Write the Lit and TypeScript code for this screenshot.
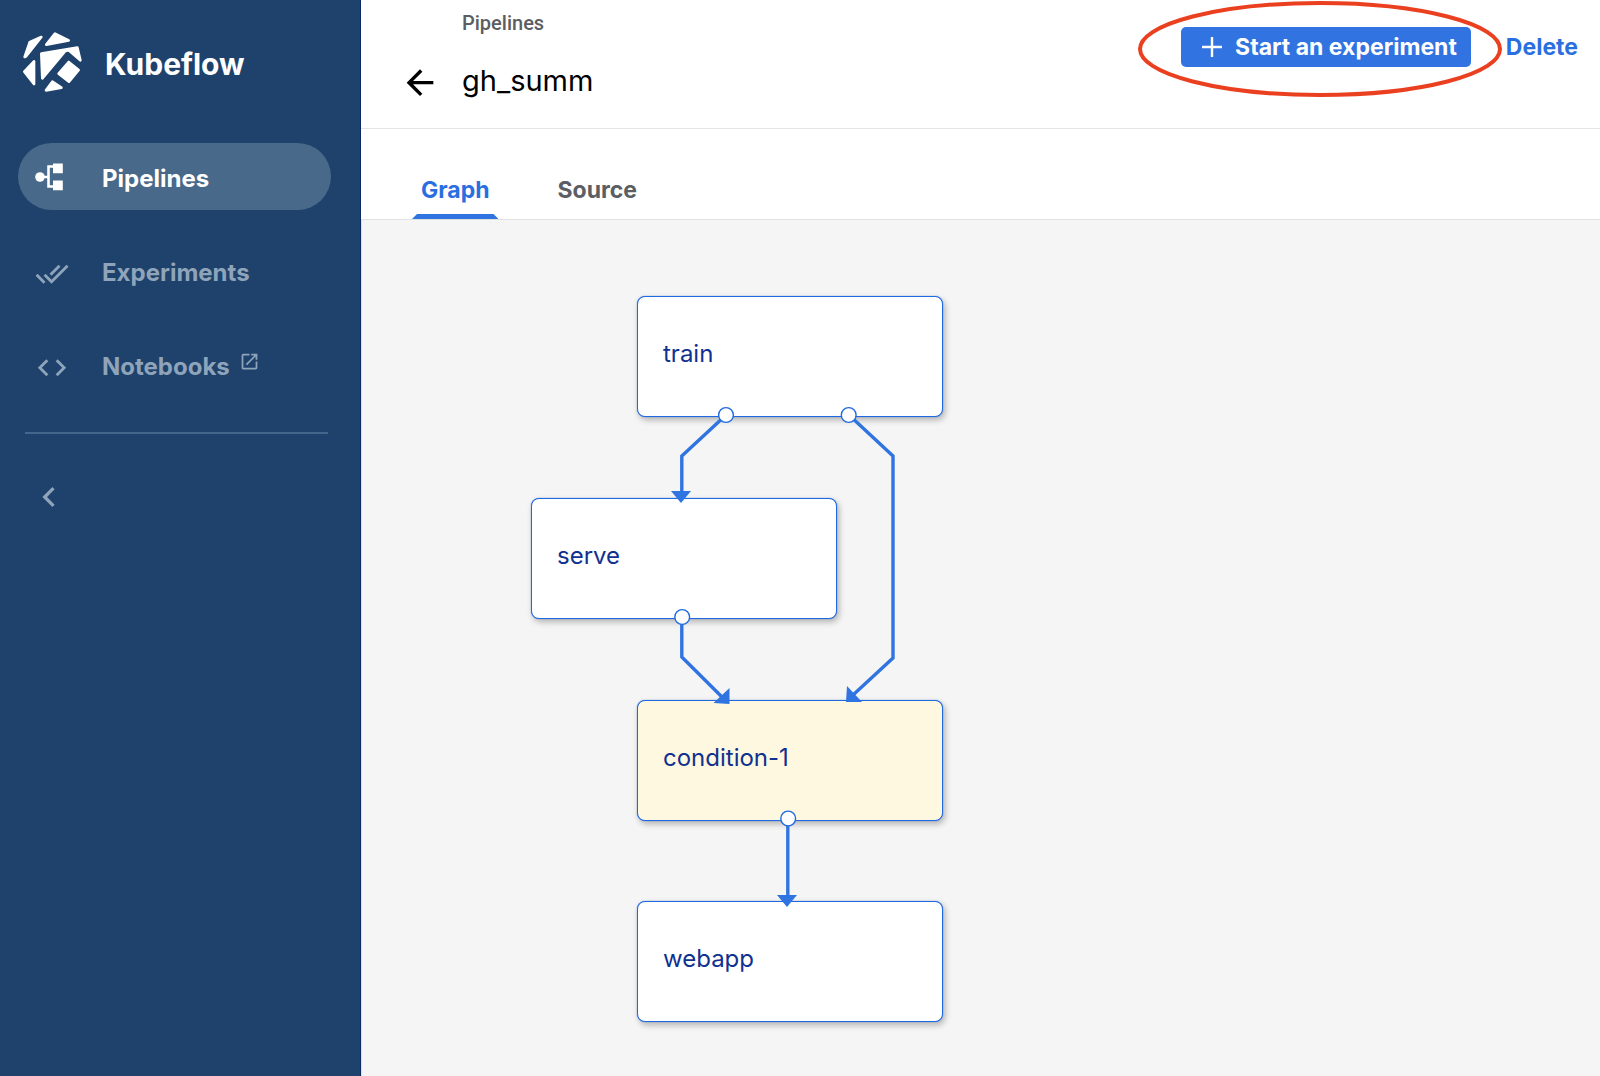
import {LitElement, html, svg, css} from 'lit';
import {customElement, property, state} from 'lit/decorators.js';
import {classMap} from 'lit/directives/class-map.js';
import {styleMap} from 'lit/directives/style-map.js';

interface NavItem {
  label: string;
  icon: unknown;
  external?: boolean;
}

const pipelineIcon = html`<svg viewBox="0 0 34 34" aria-hidden="true">
  <circle cx="5" cy="17" r="4.8" fill="currentColor"/>
  <path d="M8 17h5.5M19 6.5h-5.5v20H19" fill="none" stroke="currentColor" stroke-width="2.6"/>
  <path d="M18 3.5h9.8v9.8H18zM18 20.5h9.8v9.8H18z" fill="currentColor"/>
</svg>`;

const doneAllIcon = html`<svg viewBox="0 -2 24 24" aria-hidden="true">
  <path fill="currentColor" d="M18 7l-1.41-1.41-6.34 6.34 1.41 1.41L18 7zm4.24-1.41L11.66 16.17 7.48 12l-1.41 1.41L11.66 19l12-12-1.42-1.41zM.41 13.41L6 19l1.41-1.41L1.83 12 .41 13.41z"/>
</svg>`;

const codeIcon = html`<svg viewBox="0 -2 24 24" aria-hidden="true">
  <path fill="currentColor" d="M9.4 16.6L4.8 12l4.6-4.6L8 6l-6 6 6 6 1.4-1.4zm5.2 0l4.6-4.6-4.6-4.6L16 6l6 6-6 6-1.4-1.4z"/>
</svg>`;

const NAV: NavItem[] = [
  {label: 'Pipelines', icon: pipelineIcon},
  {label: 'Experiments', icon: doneAllIcon},
  {label: 'Notebooks', icon: codeIcon, external: true},
];

@customElement('kf-sidebar')
class KfSidebar extends LitElement {
  @property() current = 'Pipelines';

  static styles = css`
    :host {
      display: block;
      box-sizing: border-box;
      background: #1e426b;
      border-right: 1px solid #0a2a63;
      color: #8fa4ba;
    }
    .brand {
      display: flex;
      align-items: center;
      gap: 22px;
      padding: 31px 22px 50px;
      color: #fff;
      font-size: 30px;
      font-weight: 700;
    }
    .brand svg {
      width: 61px;
      height: 62px;
    }
    .text {
      padding-top: 4px;
    }
    .nav {
      display: flex;
      flex-direction: column;
      gap: 27px;
      padding: 0 29px 0 18px;
    }
    .item {
      display: flex;
      align-items: center;
      height: 67px;
      padding-left: 17px;
      border-radius: 34px;
      color: inherit;
      font-size: 24px;
      font-weight: 700;
      text-decoration: none;
    }
    .item svg {
      width: 34px;
      height: 34px;
      margin-right: 33px;
    }
    .item .external {
      width: 21px;
      height: 21px;
      margin: 0 0 6px 9px;
    }
    .active {
      background: #486989;
      color: #fff;
    }
    .divider {
      height: 2px;
      margin: 34px 32px 43px 25px;
      border: 0;
      background: #45668b;
    }
    .collapse {
      display: block;
      width: 40px;
      height: 40px;
      margin-left: 29px;
      padding: 0;
      border: 0;
      background: none;
      color: inherit;
    }
  `;

  render() {
    return html`
      <div class="brand">
        <svg viewBox="66 64 183 186" aria-hidden="true">
          <g fill="#fff" stroke="#fff" stroke-width="8" stroke-linejoin="round">
            <path d="M124 82L89 98L74 142L79 139Z"/>
            <path d="M165 72L206 92L139 105Z"/>
            <path d="M124 132L232 114L241 152L208 123Q202 121 196 124L127 206Z"/>
            <path d="M206 157L236 181L207 216L176 192Z"/>
            <path d="M102 155L73 186L102 223Z"/>
            <path d="M157 216L184 234L138 242Z"/>
          </g>
        </svg>
        <span class="text">Kubeflow</span>
      </div>
      <nav class="nav">
        ${NAV.map(
          (n) => html`<a
            href="#${n.label.toLowerCase()}"
            class=${classMap({item: true, active: n.label === this.current})}
            >${n.icon}<span class="text">${n.label}</span>${n.external
              ? html`<svg class="external" viewBox="0 0 24 24" aria-hidden="true">
                  <path fill="currentColor" d="M19 19H5V5h7V3H5c-1.11 0-2 .9-2 2v14c0 1.1.89 2 2 2h14c1.1 0 2-.9 2-2v-7h-2v7zM14 3v2h3.59l-9.83 9.83 1.41 1.41L19 6.41V10h2V3h-7z"/>
                </svg>`
              : ''}</a
          >`
        )}
      </nav>
      <hr class="divider" />
      <button class="collapse" aria-label="Collapse">
        <svg viewBox="0 0 24 24" aria-hidden="true">
          <path fill="currentColor" d="M15.41 7.41L14 6l-6 6 6 6 1.41-1.41L10.83 12z"/>
        </svg>
      </button>
    `;
  }
}

interface GraphNode {
  label: string;
  x: number;
  y: number;
  condition?: boolean;
}

const NODES: GraphNode[] = [
  {label: 'train', x: 275, y: 76},
  {label: 'serve', x: 169, y: 278},
  {label: 'condition-1', x: 275, y: 480, condition: true},
  {label: 'webapp', x: 275, y: 681},
];

const EDGES = [
  'M364 195L319.8 236V273',
  'M487 195L531 236V438L491 475',
  'M319.8 398V437L360 477',
  'M425.8 599V678',
];
const ARROWS = [
  'M309 271h20l-10 12z',
  'M485 466l-1 16h16z',
  'M367.5 468v16l-16-1z',
  'M415 675h20l-10 12z',
];
const PORTS = [
  [364, 195],
  [486.7, 195],
  [320.2, 397],
  [426.2, 598.5],
];

@customElement('kf-graph')
class KfGraph extends LitElement {
  static styles = css`
    :host {
      display: block;
      position: relative;
      min-height: 856px;
      background: #f5f5f5;
      border-left: 1px solid #dcdfe3;
    }
    .node {
      position: absolute;
      box-sizing: border-box;
      width: 306px;
      height: 121px;
      padding: 0 25px 6px;
      border: 1px solid #1f6ae0;
      border-radius: 8px;
      background: #fff;
      box-shadow: 0 0 1px #1f6ae0, 2px 3px 6px rgba(0, 0, 0, 0.28);
      color: #10318f;
      font: inherit;
      font-size: 24px;
      text-align: left;
    }
    .condition {
      background: #fef8e0;
    }
    .edges {
      position: absolute;
      inset: 0;
      width: 100%;
      height: 100%;
      pointer-events: none;
    }
    .line {
      fill: none;
      stroke: #2f74e0;
      stroke-width: 3.4;
    }
    .arrow {
      fill: #2f74e0;
    }
    .port {
      fill: #fff;
      stroke: #1f6ae0;
      stroke-width: 1.4;
    }
  `;

  render() {
    return html`
      ${NODES.map(
        (n) => html`<button
          class=${classMap({node: true, condition: !!n.condition})}
          style=${styleMap({left: `${n.x}px`, top: `${n.y}px`})}
        >
          ${n.label}
        </button>`
      )}
      <svg class="edges" aria-hidden="true">
        ${EDGES.map((d) => svg`<path class="line" d=${d} />`)}
        ${ARROWS.map((d) => svg`<path class="arrow" d=${d} />`)}
        ${PORTS.map(([x, y]) => svg`<circle class="port" cx=${x} cy=${y} r="7.4" />`)}
      </svg>
    `;
  }
}

@customElement('app-root')
class AppRoot extends LitElement {
  @state() private tab = 'Graph';

  static styles = css`
    :host {
      display: grid;
      grid-template-columns: 361px 1fr;
      min-height: 100vh;
      background: #fff;
      font-family: Inter, "Liberation Sans", sans-serif;
    }
    .main {
      display: flex;
      flex-direction: column;
      min-width: 0;
    }
    .header {
      display: flex;
      justify-content: space-between;
      align-items: flex-start;
      padding: 11px 22px 0 39px;
      min-height: 117px;
      border-bottom: 1px solid #e4e4e4;
    }
    .heading {
      display: grid;
      grid-template-columns: 40px auto;
      column-gap: 22px;
      row-gap: 26px;
      align-items: center;
    }
    .crumb {
      grid-column: 2;
      color: #5a5d61;
      font-family: Roboto, sans-serif;
      font-size: 20px;
      font-weight: 500;
      line-height: 24px;
      text-decoration: none;
    }
    .back {
      width: 40px;
      height: 40px;
      padding: 0;
      border: 0;
      background: none;
      color: #000;
    }
    .title {
      margin: 0;
      color: #000;
      font-size: 29px;
      font-weight: 400;
      line-height: 36px;
    }
    .actions {
      display: flex;
      gap: 35px;
      padding-top: 16px;
    }
    .highlight {
      position: relative;
    }
    .ring {
      position: absolute;
      left: -44px;
      top: -27px;
      width: 366px;
      height: 98px;
      pointer-events: none;
    }
    .start,
    .delete {
      display: flex;
      align-items: center;
      height: 40px;
      border: 0;
      font: inherit;
      font-size: 23px;
      font-weight: 700;
      white-space: nowrap;
    }
    .start {
      gap: 6px;
      padding: 0 14px;
      border-radius: 5px;
      background: #3173e0;
      color: #fff;
    }
    .start svg {
      width: 34px;
      height: 34px;
    }
    .delete {
      padding: 0;
      background: none;
      color: #2a6fe0;
    }
    .tabs {
      display: flex;
      gap: 50px;
      height: 90px;
      padding-left: 51px;
      border-bottom: 1px solid #e0e0e0;
    }
    .tab {
      position: relative;
      padding: 32px 9px 0;
      border: 0;
      background: none;
      color: #5b5e64;
      font: inherit;
      font-size: 23px;
      font-weight: 700;
    }
    .selected {
      color: #2a6fe0;
    }
    .selected::after {
      content: '';
      position: absolute;
      inset: auto 0 0;
      height: 5px;
      background: #2f74e0;
      clip-path: polygon(5px 0, calc(100% - 5px) 0, 100% 100%, 0 100%);
    }
    .graph {
      flex: 1;
    }
  `;

  render() {
    return html`
      <kf-sidebar></kf-sidebar>
      <main class="main">
        <header class="header">
          <div class="heading">
            <a class="crumb" href="#pipelines">Pipelines</a>
            <button class="back" aria-label="Back">
              <svg viewBox="0 -1 24 24" aria-hidden="true">
                <path fill="currentColor" d="M20 11H7.83l5.59-5.59L12 4l-8 8 8 8 1.41-1.41L7.83 13H20v-2z"/>
              </svg>
            </button>
            <h1 class="title">gh_summ</h1>
          </div>
          <div class="actions">
            <div class="highlight">
              <button class="start">
                <svg viewBox="0 0 24 24" aria-hidden="true">
                  <path d="M12 5v14M5 12h14" fill="none" stroke="currentColor" stroke-width="1.7"/>
                </svg>
                Start an experiment
              </button>
              <svg class="ring" viewBox="0 0 366 98" aria-hidden="true">
                <ellipse cx="183" cy="49" rx="180" ry="46" fill="none" stroke="#ea4020" stroke-width="4"/>
              </svg>
            </div>
            <button class="delete">Delete</button>
          </div>
        </header>
        <div class="tabs" role="tablist">
          ${['Graph', 'Source'].map(
            (t) => html`<button
              role="tab"
              aria-selected=${t === this.tab ? 'true' : 'false'}
              class=${classMap({tab: true, selected: t === this.tab})}
              @click=${() => (this.tab = t)}
            >
              ${t}
            </button>`
          )}
        </div>
        <kf-graph class="graph"></kf-graph>
      </main>
    `;
  }
}
